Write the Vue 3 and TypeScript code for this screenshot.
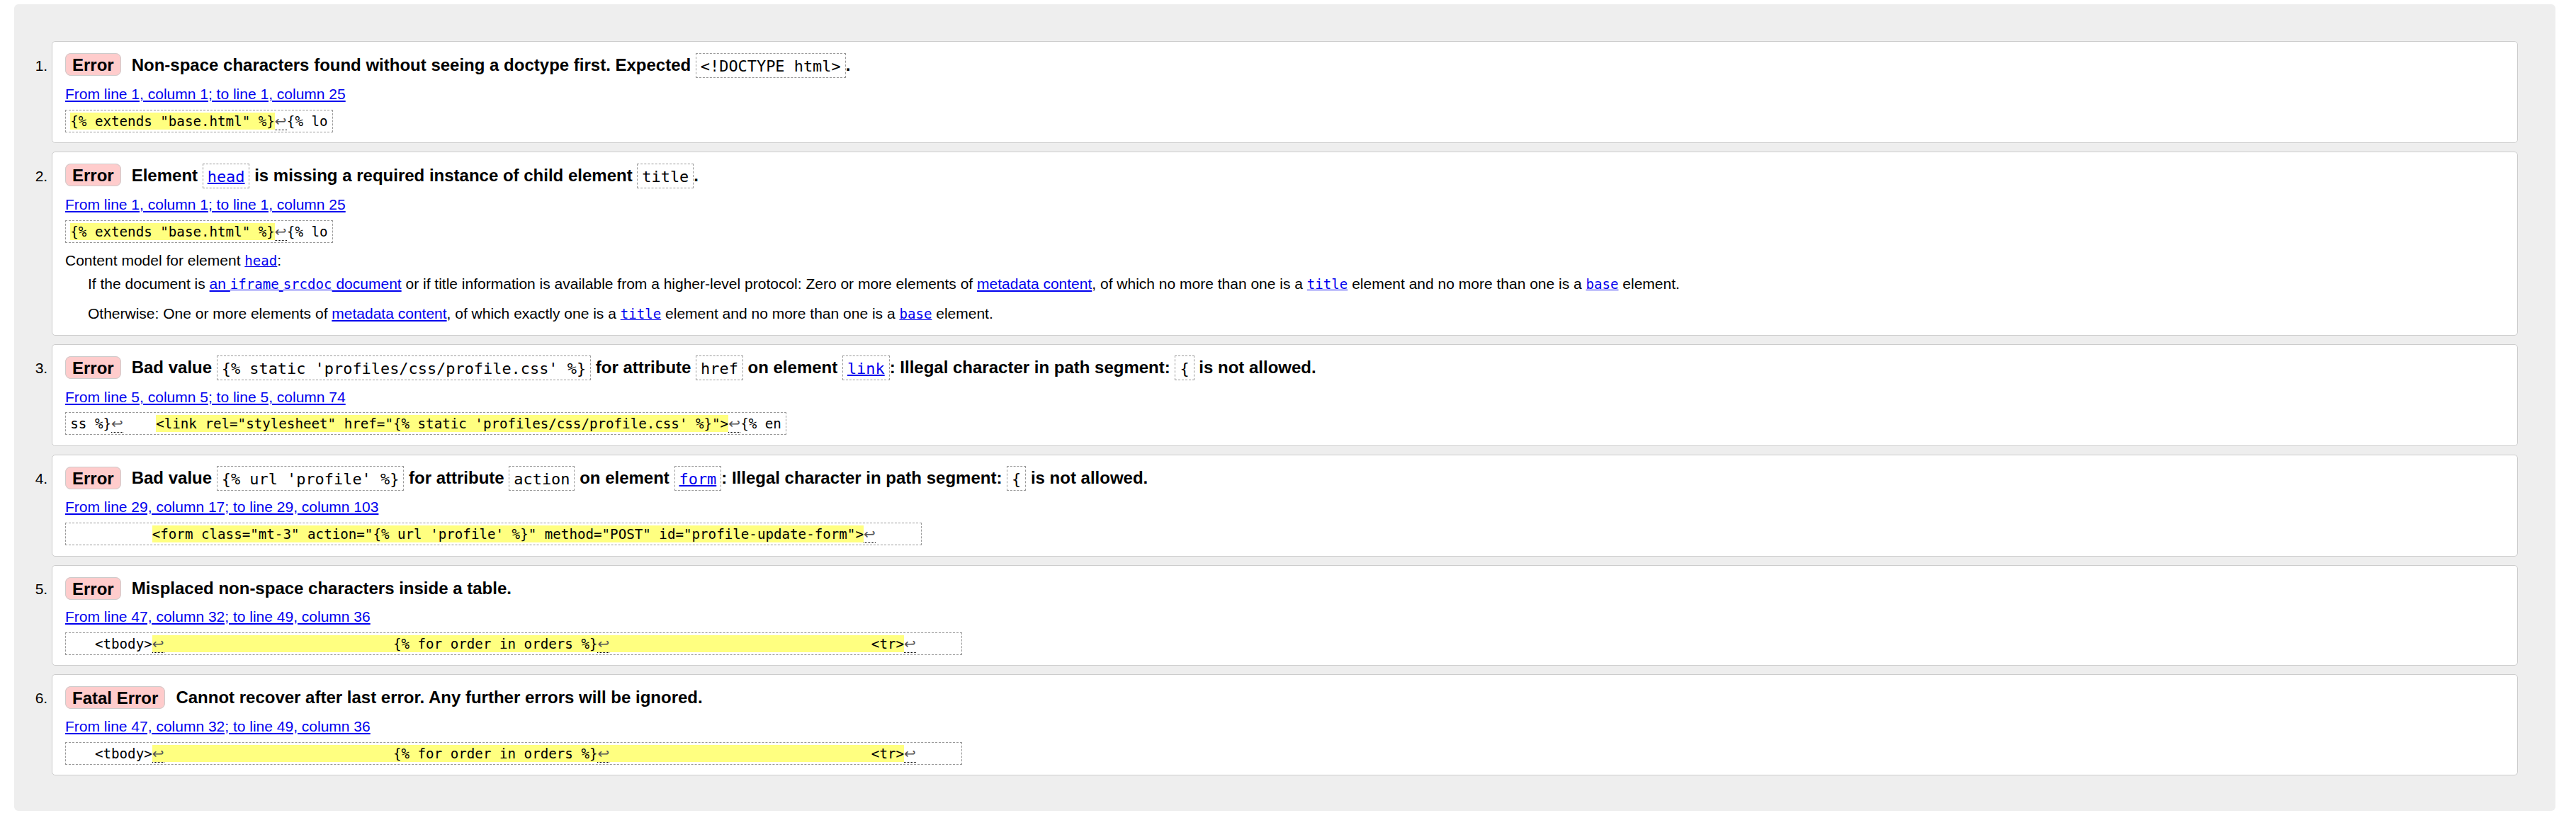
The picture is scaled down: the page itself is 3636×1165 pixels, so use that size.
<script setup lang="ts">
type Kind = 'text' | 'code' | 'link' | 'codelink'
interface Piece {
  kind: Kind
  text: string
}
interface Extract {
  before: string
  marked: string
  after: string
}
interface Message {
  type: string
  message: Piece[]
  location: string
  extract: Extract
  model?: { title: Piece[]; rules: Piece[][] }
}

const t = (text: string): Piece => ({ kind: 'text', text })
const c = (text: string): Piece => ({ kind: 'code', text })
const l = (text: string): Piece => ({ kind: 'link', text })
const cl = (text: string): Piece => ({ kind: 'codelink', text })
const sp = (count: number): string => ' '.repeat(count)

// Keeps each line-break sign as its own token so it can be wrapped in <abbr>.
const tokens = (text: string): string[] => text.split(/(↩)/).filter((part) => part !== '')

const extendsExtract: Extract = { before: '', marked: '{% extends "base.html" %}', after: '↩{% lo' }
const tableExtract: Extract = {
  before: sp(3) + '<tbody>',
  marked: '↩' + sp(28) + '{% for order in orders %}↩' + sp(32) + '<tr>',
  after: '↩' + sp(5),
}

const messages: Message[] = [
  {
    type: 'Error',
    message: [
      t('Non-space characters found without seeing a doctype first. Expected '),
      c('<!DOCTYPE html>'),
      t('.'),
    ],
    location: 'From line 1, column 1; to line 1, column 25',
    extract: extendsExtract,
  },
  {
    type: 'Error',
    message: [
      t('Element '),
      cl('head'),
      t(' is missing a required instance of child element '),
      c('title'),
      t('.'),
    ],
    location: 'From line 1, column 1; to line 1, column 25',
    extract: extendsExtract,
    model: {
      title: [t('Content model for element '), cl('head'), t(':')],
      rules: [
        [
          t('If the document is '),
          l('an '),
          cl('iframe'),
          l(' '),
          cl('srcdoc'),
          l(' document'),
          t(' or if title information is available from a higher-level protocol: Zero or more elements of '),
          l('metadata content'),
          t(', of which no more than one is a '),
          cl('title'),
          t(' element and no more than one is a '),
          cl('base'),
          t(' element.'),
        ],
        [
          t('Otherwise: One or more elements of '),
          l('metadata content'),
          t(', of which exactly one is a '),
          cl('title'),
          t(' element and no more than one is a '),
          cl('base'),
          t(' element.'),
        ],
      ],
    },
  },
  {
    type: 'Error',
    message: [
      t('Bad value '),
      c("{% static 'profiles/css/profile.css' %}"),
      t(' for attribute '),
      c('href'),
      t(' on element '),
      cl('link'),
      t(': Illegal character in path segment: '),
      c('{'),
      t(' is not allowed.'),
    ],
    location: 'From line 5, column 5; to line 5, column 74',
    extract: {
      before: 'ss %}↩' + sp(4),
      marked: '<link rel="stylesheet" href="{% static \'profiles/css/profile.css\' %}">',
      after: '↩{% en',
    },
  },
  {
    type: 'Error',
    message: [
      t('Bad value '),
      c("{% url 'profile' %}"),
      t(' for attribute '),
      c('action'),
      t(' on element '),
      cl('form'),
      t(': Illegal character in path segment: '),
      c('{'),
      t(' is not allowed.'),
    ],
    location: 'From line 29, column 17; to line 29, column 103',
    extract: {
      before: sp(10),
      marked: '<form class="mt-3" action="{% url \'profile\' %}" method="POST" id="profile-update-form">',
      after: '↩' + sp(5),
    },
  },
  {
    type: 'Error',
    message: [t('Misplaced non-space characters inside a table.')],
    location: 'From line 47, column 32; to line 49, column 36',
    extract: tableExtract,
  },
  {
    type: 'Fatal Error',
    message: [t('Cannot recover after last error. Any further errors will be ignored.')],
    location: 'From line 47, column 32; to line 49, column 36',
    extract: tableExtract,
  },
]
</script>

<template>
  <main class="results">
    <ol>
      <li v-for="(m, i) in messages" :key="i">
        <p class="heading">
          <strong class="badge">{{ m.type }}</strong>
          <span class="message">
            <template v-for="(p, k) in m.message" :key="k">
              <code v-if="p.kind === 'code'">{{ p.text }}</code>
              <code v-else-if="p.kind === 'codelink'"><a href="#">{{ p.text }}</a></code>
              <span v-else>{{ p.text }}</span>
            </template>
          </span>
        </p>
        <p class="location"><a href="#">{{ m.location }}</a></p>
        <p class="extract">
          <template v-for="(s, k) in tokens(m.extract.before)" :key="'b' + k">
            <abbr v-if="s === '↩'">{{ s }}</abbr>
            <span v-else>{{ s }}</span>
          </template>
          <b>
            <template v-for="(s, k) in tokens(m.extract.marked)" :key="'m' + k">
              <abbr v-if="s === '↩'">{{ s }}</abbr>
              <span v-else>{{ s }}</span>
            </template>
          </b>
          <template v-for="(s, k) in tokens(m.extract.after)" :key="'a' + k">
            <abbr v-if="s === '↩'">{{ s }}</abbr>
            <span v-else>{{ s }}</span>
          </template>
        </p>
        <dl v-if="m.model">
          <dt>
            <template v-for="(p, k) in m.model.title" :key="k">
              <a v-if="p.kind === 'codelink'" href="#" class="mono">{{ p.text }}</a>
              <span v-else>{{ p.text }}</span>
            </template>
          </dt>
          <dd v-for="(rule, r) in m.model.rules" :key="r">
            <template v-for="(p, k) in rule" :key="k">
              <a v-if="p.kind === 'codelink'" href="#" class="mono">{{ p.text }}</a>
              <a v-else-if="p.kind === 'link'" href="#">{{ p.text }}</a>
              <span v-else>{{ p.text }}</span>
            </template>
          </dd>
        </dl>
      </li>
    </ol>
  </main>
</template>

<style>
body {
  background: #fff;
}
</style>

<style scoped>
.results {
  display: flow-root;
  margin: 6px 29px 0 20px;
  padding: 52px 53px 50px 53px;
  background: #eee;
  border-radius: 6px;
  font: 21px/24px "Liberation Sans", Arial, sans-serif;
  color: #000;
}
ol,
dl,
dd,
p {
  margin: 0;
  padding: 0;
}
li {
  box-sizing: border-box;
  margin-bottom: 12px;
  padding: 15px 18px 14px;
  border: 1px solid #ccc;
  border-radius: 5px;
  background: #fff;
}
li:last-child {
  margin-bottom: 0;
}
a {
  color: #00e;
  text-decoration: underline;
}
.heading {
  height: 36px;
  font-size: 24px;
  font-weight: bold;
  line-height: 36px;
  white-space: pre;
}
.badge {
  margin-right: 15px;
  padding: 2px 9px 1px;
  border: 1px solid #ccc;
  border-radius: 8px;
  background: #fcc;
}
code {
  padding: 4.5px 6px 4px;
  border: 1px dashed #999;
  font: 21.92px/22px "DejaVu Sans Mono", monospace;
}
.location {
  height: 30px;
  margin-top: 8px;
  line-height: 30px;
}
.extract {
  box-sizing: border-box;
  width: fit-content;
  height: 32px;
  margin-top: 7px;
  padding: 0 6.3px;
  border: 1px dashed #999;
  font: 19.18px/31px "DejaVu Sans Mono", monospace;
  white-space: pre;
}
.extract b {
  padding-top: 1px;
  background: #ffff80;
  font-weight: normal;
}
abbr {
  display: inline-block;
  box-sizing: border-box;
  width: 17px;
  height: 24px;
  border-bottom: 1px dotted #000;
  color: #555;
  font-family: "DejaVu Sans", sans-serif;
  font-size: 20px;
  line-height: 22px;
  text-decoration: none;
}
dt,
dd {
  height: 24px;
  white-space: nowrap;
}
dt {
  margin-top: 13px;
}
dd {
  margin: 9px 0 0 32px;
}
dd + dd {
  margin: 18px 0 4px 32px;
}
.mono {
  font: 19.1px/20px "DejaVu Sans Mono", monospace;
}
li:nth-child(n + 3) {
  padding-top: 14px;
}
li:nth-child(n + 3) .badge {
  vertical-align: -1px;
}
li:nth-child(3) .location {
  margin-top: 9px;
}
li:nth-child(3) .extract {
  margin-top: 6px;
}
li:nth-child(3),
li:nth-child(4) {
  padding-bottom: 15px;
}
li:nth-child(5) .location {
  margin-top: 7px;
}
</style>
